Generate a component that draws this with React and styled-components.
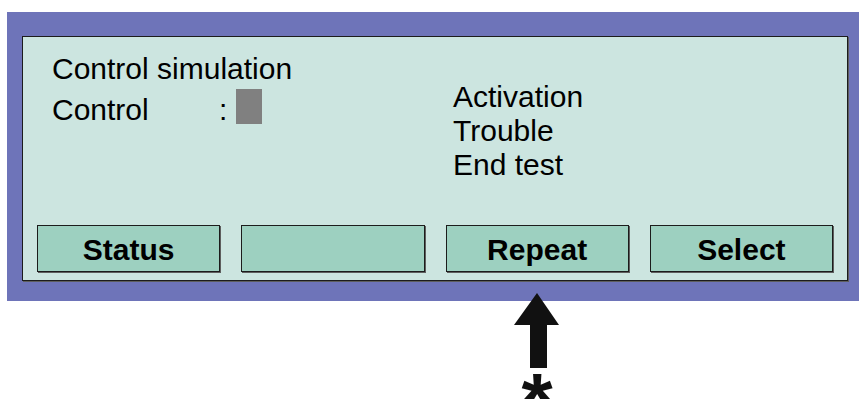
import React from "react";
import styled, { createGlobalStyle } from "styled-components";

const Global = createGlobalStyle`
  html, body { margin: 0; padding: 0; background: #ffffff; }
  body { font-family: "Liberation Sans", Arial, sans-serif; }
`;

const Page = styled.div`
  position: relative;
  width: 859px;
  height: 399px;
  overflow: hidden;
  background: #ffffff;
`;

const Frame = styled.div`
  margin: 12px 0 0 7px;
  width: 852px;
  height: 289px;
  box-sizing: border-box;
  background: #6e74b9;
  padding: 24px 11px 20px 15px;
`;

const Screen = styled.div`
  box-sizing: border-box;
  height: 100%;
  background: #cce5e0;
  border: 1px solid #1c1c1c;
  box-shadow: 1px 1px 0 #5e5e5e;
  display: flex;
  flex-direction: column;
  justify-content: space-between;
  padding: 0 14px 8px 14px;
`;

const Content = styled.div`
  display: grid;
  grid-template-columns: 410px 1fr;
  color: #000;
  font-size: 30px;
`;

const LeftCol = styled.div`
  padding: 15px 0 0 15px;
  display: flex;
  flex-direction: column;
  gap: 7px;
`;

const RightCol = styled.div`
  padding: 43px 0 0 6px;
  display: flex;
  flex-direction: column;
`;

const Line = styled.div`
  line-height: 34px;
  white-space: nowrap;
`;

const FieldRow = styled.div`
  display: flex;
  align-items: center;
  line-height: 34px;
`;

const Label = styled.span`
  width: 167px;
`;

const Colon = styled.span`
  width: 17px;
`;

const Cursor = styled.span`
  display: inline-block;
  width: 26px;
  height: 35px;
  background: #808080;
  margin-top: -8px;
`;

const Keys = styled.div`
  display: grid;
  grid-template-columns: repeat(4, 1fr);
  column-gap: 21px;
`;

const Key = styled.div`
  box-sizing: border-box;
  height: 47px;
  padding-top: 3px;
  background: #9dd0c0;
  border: 1px solid #1c1c1c;
  box-shadow: 1px 1px 0 #5e5e5e;
  display: flex;
  align-items: center;
  justify-content: center;
  font-weight: bold;
  font-size: 30px;
  color: #000;
`;

const Pointer = styled.div`
  position: absolute;
  left: 512px;
  top: 292px;
  width: 50px;
  display: flex;
  flex-direction: column;
  align-items: center;
`;

const Star = styled.div`
  font-family: "Liberation Sans", Arial, sans-serif;
  font-weight: bold;
  font-size: 80px;
  line-height: 1;
  color: #111;
  margin-top: -7px;
`;

export default function App() {
  return (
    <Page>
      <Global />
      <Frame>
        <Screen>
          <Content>
            <LeftCol>
              <Line>Control simulation</Line>
              <FieldRow>
                <Label>Control</Label>
                <Colon>:</Colon>
                <Cursor />
              </FieldRow>
            </LeftCol>
            <RightCol>
              <Line>Activation</Line>
              <Line>Trouble</Line>
              <Line>End test</Line>
            </RightCol>
          </Content>
          <Keys>
            <Key>Status</Key>
            <Key />
            <Key>Repeat</Key>
            <Key>Select</Key>
          </Keys>
        </Screen>
      </Frame>
      <Pointer>
        <svg width="50" height="77" viewBox="0 0 50 77">
          <polygon points="25,1 47,33 35,33 35,76 18,76 18,33 2,33" fill="#111" />
        </svg>
        <Star>*</Star>
      </Pointer>
    </Page>
  );
}
